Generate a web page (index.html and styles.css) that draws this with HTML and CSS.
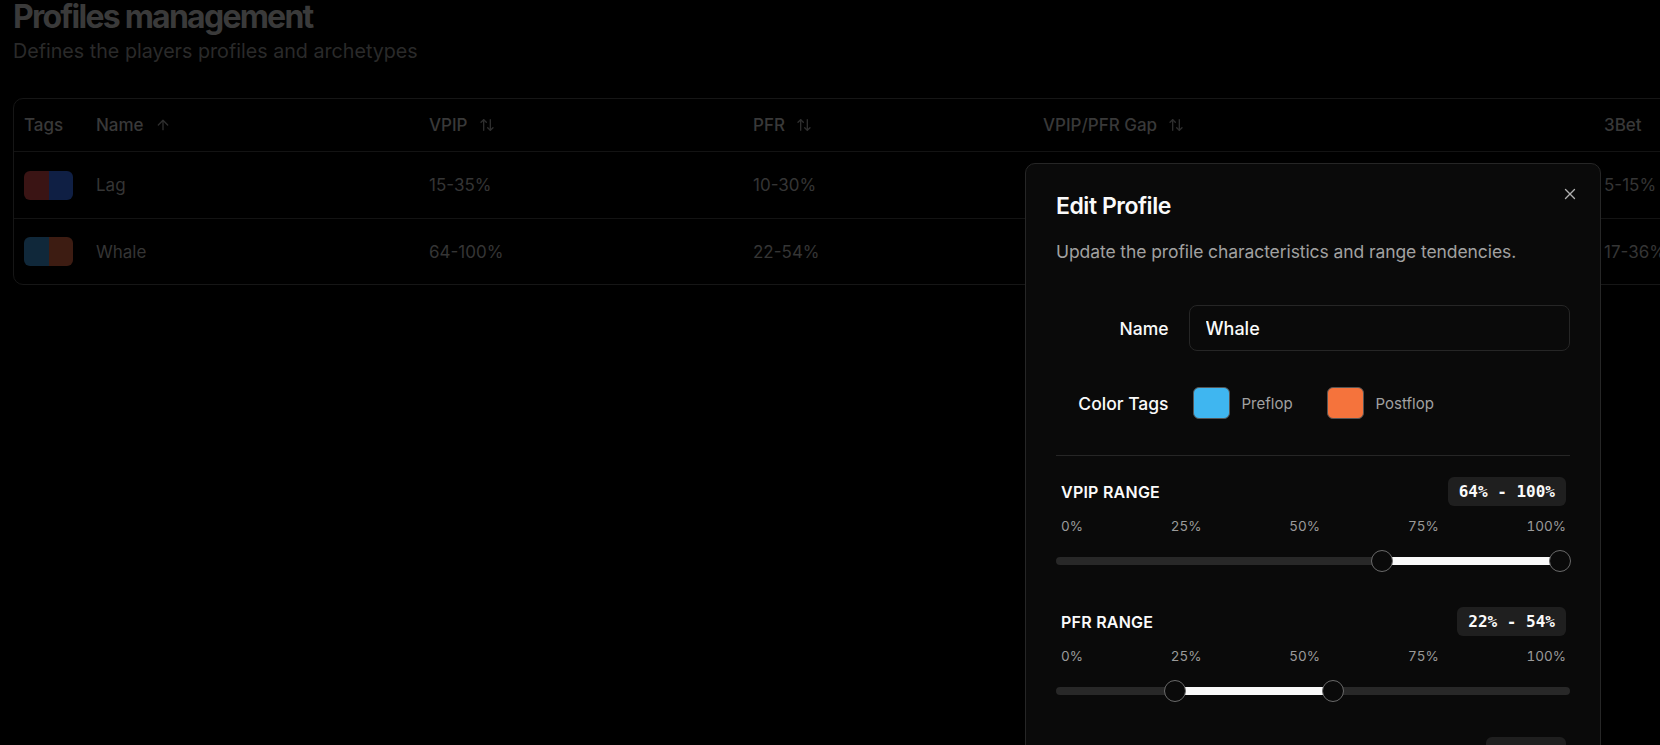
FILE: index.html
```html
<!DOCTYPE html>
<html lang="en">
<head>
<meta charset="utf-8">
<title>Profiles management</title>
<link rel="stylesheet" href="styles.css">
</head>
<body>
<main class="page">
  <h1 class="title">Profiles management</h1>
  <p class="subtitle">Defines the players profiles and archetypes</p>

  <div class="table">
    <div class="row head">
      <div class="cell">Tags</div>
      <div class="cell">Name
        <svg class="sort" viewBox="0 0 24 24"><path d="m5 12 7-7 7 7"/><path d="M12 19V5"/></svg>
      </div>
      <div class="cell">VPIP
        <svg class="sort" viewBox="0 0 24 24"><path d="m21 16-4 4-4-4"/><path d="M17 20V4"/><path d="m3 8 4-4 4 4"/><path d="M7 4v16"/></svg>
      </div>
      <div class="cell">PFR
        <svg class="sort" viewBox="0 0 24 24"><path d="m21 16-4 4-4-4"/><path d="M17 20V4"/><path d="m3 8 4-4 4 4"/><path d="M7 4v16"/></svg>
      </div>
      <div class="cell">VPIP/PFR Gap
        <svg class="sort" viewBox="0 0 24 24"><path d="m21 16-4 4-4-4"/><path d="M17 20V4"/><path d="m3 8 4-4 4 4"/><path d="M7 4v16"/></svg>
      </div>
      <div class="cell">3Bet</div>
      <div class="cell"></div>
    </div>

    <div class="row">
      <div class="cell"><span class="tag"><span class="half red"></span><span class="half blue"></span></span></div>
      <div class="cell">Lag</div>
      <div class="cell">15-35%</div>
      <div class="cell">10-30%</div>
      <div class="cell"></div>
      <div class="cell">5-15%</div>
      <div class="cell"></div>
    </div>

    <div class="row">
      <div class="cell"><span class="tag"><span class="half sky"></span><span class="half orange"></span></span></div>
      <div class="cell">Whale</div>
      <div class="cell">64-100%</div>
      <div class="cell">22-54%</div>
      <div class="cell"></div>
      <div class="cell">17-36%</div>
      <div class="cell"></div>
    </div>
  </div>
</main>

<section class="modal" role="dialog" aria-labelledby="dlg-title">
  <button class="close" type="button" aria-label="Close">
    <svg viewBox="0 0 16 16"><path d="M2 2 14 14"/><path d="M14 2 2 14"/></svg>
  </button>

  <h2 class="modal-title" id="dlg-title">Edit Profile</h2>
  <p class="modal-desc">Update the profile characteristics and range tendencies.</p>

  <div class="form">
    <div class="form-row">
      <label class="form-label" for="pname">Name</label>
      <input class="input" id="pname" type="text" value="Whale">
    </div>
    <div class="form-row tags-row">
      <span class="form-label">Color Tags</span>
      <div class="color-tags">
        <div class="color-tag"><span class="swatch swatch-pre"></span><span class="color-name">Preflop</span></div>
        <div class="color-tag"><span class="swatch swatch-post"></span><span class="color-name">Postflop</span></div>
      </div>
    </div>
  </div>

  <div class="ranges">
    <div class="range">
      <div class="range-head">
        <span class="range-label">VPIP Range</span>
        <span class="badge">64% - 100%</span>
      </div>
      <div class="ticks"><span>0%</span><span>25%</span><span>50%</span><span>75%</span><span>100%</span></div>
      <div class="slider" style="--lo:64;--hi:100">
        <span class="track"></span>
        <span class="fill"></span>
        <span class="thumb thumb-lo"></span>
        <span class="thumb thumb-hi"></span>
      </div>
    </div>

    <div class="range">
      <div class="range-head">
        <span class="range-label">PFR Range</span>
        <span class="badge">22% - 54%</span>
      </div>
      <div class="ticks"><span>0%</span><span>25%</span><span>50%</span><span>75%</span><span>100%</span></div>
      <div class="slider" style="--lo:22;--hi:54">
        <span class="track"></span>
        <span class="fill"></span>
        <span class="thumb thumb-lo"></span>
        <span class="thumb thumb-hi"></span>
      </div>
    </div>

    <div class="range">
      <div class="range-head">
        <span class="range-label">Gap Range</span>
        <span class="badge">9 - 46</span>
      </div>
    </div>
  </div>
</section>
</body>
</html>
```

FILE: styles.css
```css
* { box-sizing: border-box; }

html, body {
  margin: 0;
  height: 100%;
}

body {
  background: #000;
  font-family: Inter, "Noto Sans", sans-serif;
  overflow: hidden;
  position: relative;
}

.page {
  padding: 0 13px;
}

.title {
  margin: 0;
  font-size: 32px;
  line-height: 34px;
  font-weight: 700;
  letter-spacing: -0.055em;
  color: #3a3a3a;
}

.subtitle {
  margin: 3px 0 0;
  font-size: 19.7px;
  line-height: 28px;
  color: #2a2a2a;
}

.table {
  margin-top: 33px;
  width: 1800px;
  border: 1px solid #161616;
  border-radius: 10px;
}

.row {
  display: grid;
  grid-template-columns: 72px 333px 324px 290px 561px 160px 1fr;
  align-items: center;
  height: 67px;
  border-top: 1px solid #131313;
}

.row.head {
  height: 52px;
  border-top: 0;
}

.row:last-child {
  height: 66px;
}

.cell {
  display: flex;
  align-items: center;
  padding: 0 10px;
  font-size: 17px;
  color: #353535;
  white-space: nowrap;
}

.head .cell {
  color: #393939;
  font-weight: 500;
}

.sort {
  width: 16px;
  height: 16px;
  margin-left: 11px;
  fill: none;
  stroke: #2e2e2e;
  stroke-width: 2;
  stroke-linecap: round;
  stroke-linejoin: round;
}

.tag {
  display: flex;
  width: 49px;
  height: 29px;
  border-radius: 6px;
  overflow: hidden;
}

.half { flex: 1; }
.red { background: #3a1414; }
.blue { background: #0f1f44; }
.sky { background: #10283a; }
.orange { background: #3d1c12; }

/* ---------- dialog ---------- */
.modal {
  position: absolute;
  left: 1025px;
  top: 163px;
  width: 576px;
  height: 660px;
  background: #0a0a0a;
  border: 1px solid #262626;
  border-radius: 10px;
  padding: 28px 30px;
  color: #fafafa;
}

.close {
  position: absolute;
  top: 22px;
  right: 22px;
  width: 16px;
  height: 16px;
  padding: 0;
  border: 0;
  background: none;
  display: flex;
}

.close svg {
  width: 12px;
  height: 12px;
  margin: 2px;
  fill: none;
  stroke: #b0b0b0;
  stroke-width: 1.8;
  stroke-linecap: round;
}

.modal-title {
  margin: 0;
  font-size: 23px;
  line-height: 28px;
  font-weight: 600;
  letter-spacing: -0.02em;
}

.modal-desc {
  margin: 20px 0 0;
  font-size: 17.5px;
  line-height: 24px;
  color: #a1a1a1;
  letter-spacing: -0.005em;
}

.form {
  margin-top: 41px;
  display: flex;
  flex-direction: column;
  gap: 36px;
}

.form-row {
  display: grid;
  grid-template-columns: repeat(4, 1fr);
  gap: 16px;
  align-items: center;
}

.form-label {
  text-align: right;
  font-size: 17.5px;
  font-weight: 500;
  color: #fafafa;
  padding-right: 4px;
}

.input {
  grid-column: span 3;
  height: 46px;
  border: 1px solid #262626;
  border-radius: 8px;
  background: #0a0a0a;
  color: #fafafa;
  font-family: inherit;
  font-size: 18px;
  font-weight: 500;
  padding: 0 16px;
  outline: none;
}

.color-tags {
  grid-column: span 3;
  display: flex;
  align-items: center;
  gap: 34px;
  padding-left: 4px;
}

.color-tag {
  display: flex;
  align-items: center;
  gap: 12px;
}

.swatch {
  width: 37px;
  height: 32px;
  border: 1px solid #555;
  border-radius: 6px;
}

.swatch-pre { background: #3fb6f0; }
.swatch-post { background: #f5733c; }

.color-name {
  font-size: 15px;
  color: #a1a1a1;
}

.ranges {
  margin-top: 36px;
  border-top: 1px solid #262626;
  padding-top: 21px;
  display: flex;
  flex-direction: column;
  gap: 35px;
}

.range-head {
  display: flex;
  justify-content: space-between;
  align-items: center;
  height: 29px;
  padding: 0 4px 0 5px;
}

.range-label {
  font-size: 16px;
  font-weight: 600;
  text-transform: uppercase;
  letter-spacing: 0.015em;
}

.badge {
  height: 29px;
  line-height: 29px;
  padding: 0 11px;
  background: #1f1f1f;
  border-radius: 6px;
  font-family: "DejaVu Sans Mono", "Liberation Mono", monospace;
  font-size: 16px;
  font-weight: 700;
  color: #fafafa;
}

.ticks {
  margin-top: 10px;
  display: flex;
  justify-content: space-between;
  padding: 0 4px 0 5px;
  font-size: 13.5px;
  line-height: 20px;
  color: #9a9a9a;
  font-variant-numeric: tabular-nums;
}

.slider {
  position: relative;
  margin-top: 14px;
  height: 22px;
}

.track {
  position: absolute;
  left: 0;
  right: 0;
  top: 7px;
  height: 8px;
  border-radius: 4px;
  background: #282828;
}

.fill {
  position: absolute;
  top: 7px;
  height: 8px;
  background: #fafafa;
  left: calc(10px + (100% - 20px) * var(--lo) / 100);
  width: calc((100% - 20px) * (var(--hi) - var(--lo)) / 100);
}

.thumb {
  position: absolute;
  top: 0;
  width: 22px;
  height: 22px;
  border-radius: 50%;
  border: 1.5px solid #6a6a6a;
  background: #0a0a0a;
}

.thumb-lo { left: calc(10px + (100% - 20px) * var(--lo) / 100 - 11px); }
.thumb-hi { left: calc(10px + (100% - 20px) * var(--hi) / 100 - 11px); }
```
